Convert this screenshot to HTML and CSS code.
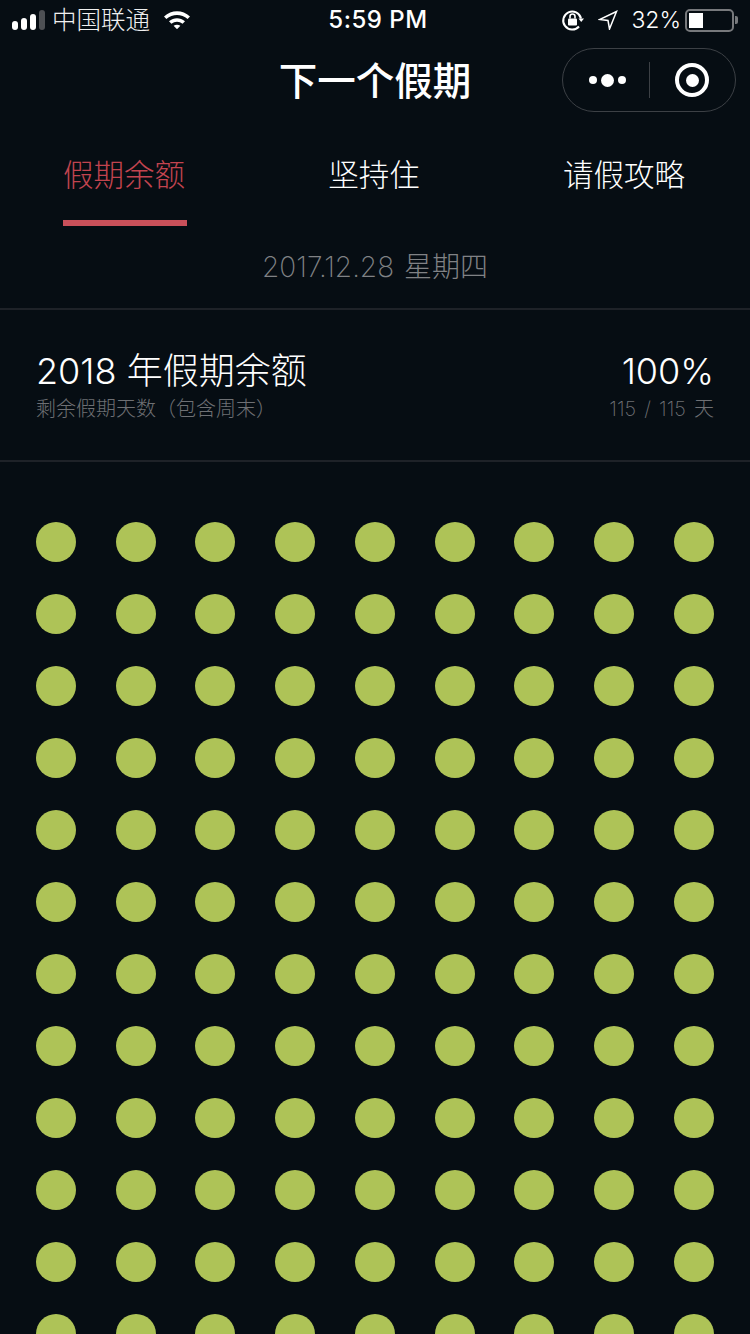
FILE: index.html
```html
<!DOCTYPE html>
<html lang="zh-CN">
<head>
	<meta charset="UTF-8">
	<title>下一个假期</title>
	<link rel="stylesheet" href="styles.css">
</head>
<body>
	<div class="status">
		<div class="status-left">
			<div class="signal"><i></i><i></i><i></i><i class="off"></i></div>
			<span class="carrier">中国联通</span>
			<svg class="wifi" width="28" height="20" viewBox="0 0 28 20">
				<path d="M1 7.5C8.500 .5 19.500 .5 27 7.500L24.600 10C18.500 4.500 9.500 4.500 3.400 10Z" fill="#fff"/>
				<path d="M6 12.300C10.800 8.200 17.200 8.200 22 12.300L19.600 14.800C16.200 12 11.800 12 8.400 14.800Z" fill="#fff"/>
				<path d="M10.600 16.800C12.700 15.300 15.300 15.300 17.400 16.800L14 20.200Z" fill="#fff"/>
			</svg>
		</div>
		<div class="status-time">5:59 PM</div>
		<div class="status-right">
			<svg class="lock" width="24" height="24" viewBox="0 0 24 24">
				<path d="M20 10.500A9 9 0 1 0 18 18.500" fill="none" stroke="#fff" stroke-width="2"/>
				<path d="M17.500 10.500H23L20.200 14Z" fill="#fff"/>
				<rect x="7" y="10.500" width="9" height="7" rx="1" fill="#fff"/>
				<path d="M9 10.500V8.500a2.500 2.500 0 0 1 5 0V10.500" fill="none" stroke="#fff" stroke-width="1.600"/>
			</svg>
			<svg class="arrow" width="20" height="20" viewBox="0 0 20 20">
				<path d="M18.500 1.500L1.500 9.500L10 10.500L11.500 19Z" fill="none" stroke="#fff" stroke-width="1.500" stroke-linejoin="miter"/>
			</svg>
			<span class="percent">32%</span>
			<div class="battery"><div class="battery-fill"></div></div>
			<div class="battery-tip"></div>
		</div>
	</div>

	<div class="nav">
		<h1>下一个假期</h1>
		<div class="capsule">
			<div class="capsule-dots"><i></i><i class="mid"></i><i></i></div>
			<div class="capsule-line"></div>
			<div class="capsule-target"><i></i></div>
		</div>
	</div>

	<ul class="tabs">
		<li class="tab active"><span>假期余额</span></li>
		<li class="tab"><span>坚持住</span></li>
		<li class="tab"><span>请假攻略</span></li>
	</ul>

	<div class="date">2017.12.28 星期四</div>

	<div class="summary">
		<div>
			<div class="summary-title">2018 年假期余额</div>
			<div class="summary-sub">剩余假期天数（包含周末）</div>
		</div>
		<div class="summary-right">
			<div class="summary-title">100%</div>
			<div class="summary-sub">115 / 115 天</div>
		</div>
	</div>

	<div class="dots">
		<span></span><span></span><span></span><span></span><span></span><span></span><span></span><span></span><span></span>
		<span></span><span></span><span></span><span></span><span></span><span></span><span></span><span></span><span></span>
		<span></span><span></span><span></span><span></span><span></span><span></span><span></span><span></span><span></span>
		<span></span><span></span><span></span><span></span><span></span><span></span><span></span><span></span><span></span>
		<span></span><span></span><span></span><span></span><span></span><span></span><span></span><span></span><span></span>
		<span></span><span></span><span></span><span></span><span></span><span></span><span></span><span></span><span></span>
		<span></span><span></span><span></span><span></span><span></span><span></span><span></span><span></span><span></span>
		<span></span><span></span><span></span><span></span><span></span><span></span><span></span><span></span><span></span>
		<span></span><span></span><span></span><span></span><span></span><span></span><span></span><span></span><span></span>
		<span></span><span></span><span></span><span></span><span></span><span></span><span></span><span></span><span></span>
		<span></span><span></span><span></span><span></span><span></span><span></span><span></span><span></span><span></span>
		<span></span><span></span><span></span><span></span><span></span><span></span><span></span><span></span><span></span>
		<span></span><span></span><span></span><span></span><span></span><span></span><span></span>
	</div>
</body>
</html>
```

FILE: styles.css
```css
*{margin:0;padding:0;box-sizing:border-box;}
html,body{
	height: 1334px;
	overflow: hidden;
}
body{
	background: #060d13;
	color: #fff;
	font-family: Inter,"Noto Sans CJK SC",sans-serif;
}
.status{
	display: flex;
	align-items: center;
	justify-content: space-between;
	height: 40px;
	padding: 0 12px;
	position: relative;
}
.status-left,.status-right{
	display: flex;
	align-items: center;
}
.signal{
	display: flex;
	align-items: flex-end;
	gap: 3px;
	margin-top: -1px;
}
.signal i{
	display: block;
	width: 6px;
	border-radius: 3px;
	background: #fff;
}
.signal i:nth-child(1){height: 9px;}
.signal i:nth-child(2){height: 12px;}
.signal i:nth-child(3){height: 16px;}
.signal i:nth-child(4){height: 20px;}
.signal .off{background: #4d5054;}
.carrier{
	margin-left: 7px;
	font-size: 24.5px;
	font-weight: 300;
	line-height: 42px;
	color: #f0f0f0;
}
.wifi{margin-left: 13px;margin-top: -2px;}
.status-time{
	position: absolute;
	left: 0;
	right: 0;
	padding-left: 6px;
	text-align: center;
	font-size: 24px;
	font-weight: 500;
	letter-spacing: .5px;
	line-height: 42px;
}
.lock{margin-right: 13px;}
.arrow{margin-right: 13px;}
.percent{
	font-size: 23px;
	font-weight: 300;
	line-height: 42px;
	margin-right: 4px;
}
.battery{
	width: 49px;
	height: 23px;
	border: 2px solid #77797c;
	border-radius: 5px;
	padding: 2px;
}
.battery-fill{
	width: 14px;
	height: 100%;
	background: #fff;
}
.battery-tip{
	width: 3px;
	height: 8px;
	margin-left: 1px;
	background: #77797c;
	border-radius: 0 2px 2px 0;
}
.nav{
	display: flex;
	align-items: center;
	justify-content: center;
	height: 88px;
	position: relative;
}
.nav h1{
	font-size: 38.5px;
	font-weight: 500;
	margin-top: -12px;
}
.capsule{
	position: absolute;
	right: 14px;
	top: 8px;
	display: flex;
	align-items: center;
	width: 174px;
	height: 64px;
	border: 1px solid #3c4045;
	border-radius: 32px;
}
.capsule-dots{
	display: flex;
	align-items: center;
	justify-content: center;
	gap: 4px;
	width: 86px;
	padding-left: 2px;
}
.capsule-dots i{
	display: block;
	width: 8px;
	height: 8px;
	border-radius: 50%;
	background: #fff;
}
.capsule-dots .mid{width: 13px;height: 13px;}
.capsule-line{
	width: 1px;
	height: 36px;
	background: #3c4045;
}
.capsule-target{
	display: flex;
	align-items: center;
	justify-content: center;
	width: 84px;
}
.capsule-target i{
	display: flex;
	align-items: center;
	justify-content: center;
	width: 34px;
	height: 34px;
	border: 4px solid #fff;
	border-radius: 50%;
}
.capsule-target i:after{
	content: "";
	width: 13px;
	height: 13px;
	border-radius: 50%;
	background: #fff;
}
.tabs{
	display: flex;
	list-style: none;
	height: 98px;
}
.tab{
	flex: 1;
	display: flex;
	justify-content: center;
}
.tab span{
	height: 98px;
	padding: 0 2px 0 0;
	font-size: 30.5px;
	font-weight: 300;
	line-height: 93px;
}
.tab.active span{
	color: #c2444f;
	border-bottom: 6px solid #c9505a;
}
.date{
	height: 84px;
	border-bottom: 2px solid #1e2228;
	text-align: center;
	font-size: 28px;
	font-weight: 200;
	word-spacing: 2px;
	line-height: 82px;
	color: #808285;
}
.summary{
	display: flex;
	justify-content: space-between;
	height: 152px;
	padding: 38px 36px 0;
	border-bottom: 2px solid #1e2228;
}
.summary-title{
	font-size: 36px;
	font-weight: 300;
	line-height: 46px;
}
.summary-sub{
	font-size: 20px;
	font-weight: 200;
	word-spacing: 2.500px;
	line-height: 30px;
	color: #6e7074;
}
.summary-right{text-align: right;}
.dots{
	display: grid;
	grid-template-columns: repeat(9,40px);
	justify-content: space-between;
	row-gap: 32px;
	padding: 60px 36px 0 35.9px;
}
.dots span{
	width: 40px;
	height: 40px;
	border-radius: 50%;
	background: #aec357;
}
```
